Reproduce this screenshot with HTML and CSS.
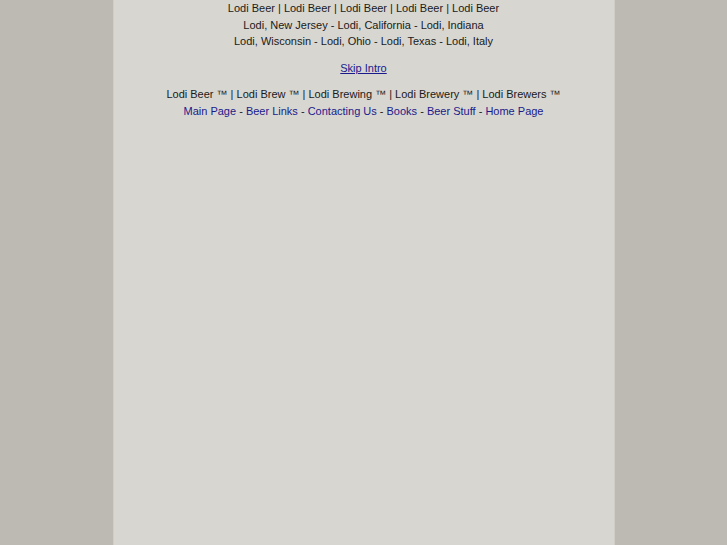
FILE: index.html
```html
<!DOCTYPE html>
<html lang="en">
<head>
<meta charset="utf-8">
<title>Lodi Beer</title>
<link rel="stylesheet" href="styles.css">
</head>
<body>

<div class="page">

  <div class="intro">
    Lodi Beer | Lodi Beer | Lodi Beer | Lodi Beer | Lodi Beer<br>
    Lodi, New Jersey - Lodi, California - Lodi, Indiana<br>
    Lodi, Wisconsin - Lodi, Ohio - Lodi, Texas - Lodi, Italy
  </div>

  <div class="skip">
    <a href="#">Skip Intro</a>
  </div>

  <div class="marks">
    Lodi Beer &trade; | Lodi Brew &trade; | Lodi Brewing &trade; | Lodi Brewery &trade; | Lodi Brewers &trade;
  </div>

  <div class="nav">
    <a href="#">Main Page</a> - <a href="#">Beer Links</a> - <a href="#">Contacting Us</a> - <a href="#">Books</a> - <a href="#">Beer Stuff</a> - <a href="#">Home Page</a>
  </div>

</div>

</body>
</html>
```

FILE: styles.css
```css
html, body {
  margin: 0;
  height: 100%;
}
body {
  background-color: #bcbab3;
  font-family: "Liberation Sans", Arial, Helvetica, sans-serif;
  font-size: 11px;
  color: #1a1a1a;
}
.page {
  width: 500px;
  min-height: 100%;
  margin: 0 auto;
  background-color: #d8d6d0;
  border-left: 1px solid #cfcdc6;
  border-right: 1px solid #cfcdc6;
  text-align: center;
}
.intro {
  line-height: 16.5px;
}
.skip {
  margin-top: 10px;
  line-height: 16.5px;
}
.skip a {
  color: #1a1a8c;
}
.marks {
  margin-top: 10px;
  line-height: 16.5px;
}
.nav {
  line-height: 16px;
}
.nav a {
  color: #1a1a8c;
  text-decoration: none;
}
```
